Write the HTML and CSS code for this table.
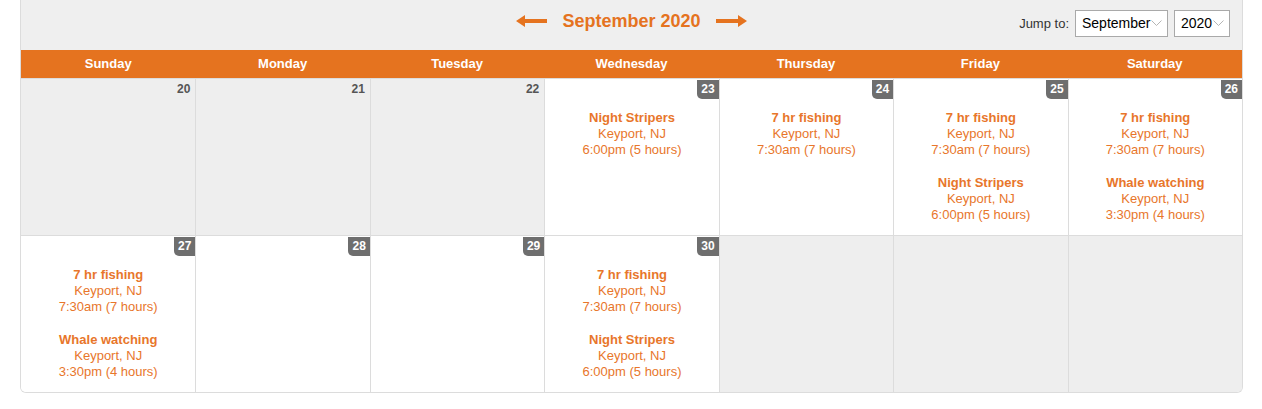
FILE: index.html
```html
<!DOCTYPE html>
<html>
<head>
<meta charset="utf-8">
<link rel="stylesheet" href="styles.css">
</head>
<body>
<div class="calendar">
  <div class="cal-head">
    <div></div>
    <div class="nav">
      <svg class="arrow" width="31" height="12" viewBox="0 0 31 12"><path d="M0 6 L9 0 L9 4 L31 4 L31 8 L9 8 L9 12 Z" fill="#e5731f"/></svg>
      <span class="month-title">September 2020</span>
      <svg class="arrow" width="31" height="12" viewBox="0 0 31 12"><path d="M31 6 L22 0 L22 4 L0 4 L0 8 L22 8 L22 12 Z" fill="#e5731f"/></svg>
    </div>
    <div class="jump">
      <span class="jump-label">Jump to:</span>
      <div class="select month-sel"><span>September</span><svg width="11" height="6" viewBox="0 0 11 6"><path d="M0.5 0.5 L5.5 5.5 L10.5 0.5" fill="none" stroke="#b5b5b5" stroke-width="1"/></svg></div>
      <div class="select year-sel"><span>2020</span><svg width="11" height="6" viewBox="0 0 11 6"><path d="M0.5 0.5 L5.5 5.5 L10.5 0.5" fill="none" stroke="#b5b5b5" stroke-width="1"/></svg></div>
    </div>
  </div>
  <div class="weekdays">
    <div>Sunday</div><div>Monday</div><div>Tuesday</div><div>Wednesday</div><div>Thursday</div><div>Friday</div><div>Saturday</div>
  </div>
  <div class="week">
    <div class="cell past"><div class="num plain">20</div></div>
    <div class="cell past"><div class="num plain">21</div></div>
    <div class="cell past"><div class="num plain">22</div></div>
    <div class="cell"><div class="num badge">23</div>
      <div class="events">
        <div class="event"><div class="ev-title">Night Stripers</div><div>Keyport, NJ</div><div>6:00pm (5 hours)</div></div>
      </div>
    </div>
    <div class="cell"><div class="num badge">24</div>
      <div class="events">
        <div class="event"><div class="ev-title">7 hr fishing</div><div>Keyport, NJ</div><div>7:30am (7 hours)</div></div>
      </div>
    </div>
    <div class="cell"><div class="num badge">25</div>
      <div class="events">
        <div class="event"><div class="ev-title">7 hr fishing</div><div>Keyport, NJ</div><div>7:30am (7 hours)</div></div>
        <div class="event"><div class="ev-title">Night Stripers</div><div>Keyport, NJ</div><div>6:00pm (5 hours)</div></div>
      </div>
    </div>
    <div class="cell"><div class="num badge">26</div>
      <div class="events">
        <div class="event"><div class="ev-title">7 hr fishing</div><div>Keyport, NJ</div><div>7:30am (7 hours)</div></div>
        <div class="event"><div class="ev-title">Whale watching</div><div>Keyport, NJ</div><div>3:30pm (4 hours)</div></div>
      </div>
    </div>
  </div>
  <div class="week">
    <div class="cell"><div class="num badge">27</div>
      <div class="events">
        <div class="event"><div class="ev-title">7 hr fishing</div><div>Keyport, NJ</div><div>7:30am (7 hours)</div></div>
        <div class="event"><div class="ev-title">Whale watching</div><div>Keyport, NJ</div><div>3:30pm (4 hours)</div></div>
      </div>
    </div>
    <div class="cell"><div class="num badge">28</div></div>
    <div class="cell"><div class="num badge">29</div></div>
    <div class="cell"><div class="num badge">30</div>
      <div class="events">
        <div class="event"><div class="ev-title">7 hr fishing</div><div>Keyport, NJ</div><div>7:30am (7 hours)</div></div>
        <div class="event"><div class="ev-title">Night Stripers</div><div>Keyport, NJ</div><div>6:00pm (5 hours)</div></div>
      </div>
    </div>
    <div class="cell past"></div>
    <div class="cell past"></div>
    <div class="cell past"></div>
  </div>
</div>
</body>
</html>
```

FILE: styles.css
```css
html, body {
  margin: 0;
  padding: 0;
  background: #fff;
}
body {
  font-family: "Liberation Sans", Arial, sans-serif;
}
.calendar {
  margin: 0 19px 0 20px;
  border: 1px solid #dcdcdc;
  border-top: none;
  border-radius: 0 0 6px 6px;
  overflow: hidden;
}
.cal-head {
  display: grid;
  grid-template-columns: 1fr auto 1fr;
  align-items: center;
  height: 50px;
  background: #efefef;
}
.nav {
  display: flex;
  align-items: center;
  gap: 15px;
  margin-top: -8px;
}
.arrow {
  display: block;
}
.month-title {
  color: #e5731f;
  font-weight: bold;
  font-size: 18px;
}
.jump {
  justify-self: end;
  display: flex;
  align-items: center;
  gap: 6px;
  padding-right: 12px;
  margin-top: -4px;
}
.jump-label {
  font-size: 13px;
  color: #333;
}
.select {
  box-sizing: border-box;
  height: 27px;
  border: 1px solid #a9a9a9;
  background: #fff;
  display: flex;
  align-items: center;
  justify-content: space-between;
  padding: 0 5px 0 6px;
  font-size: 14px;
  color: #000;
}
.month-sel { width: 93px; }
.year-sel { width: 56px; }
.weekdays {
  display: grid;
  grid-template-columns: repeat(7, 1fr);
  background: #e5731f;
  height: 29px;
  align-items: center;
  box-sizing: border-box;
  padding-bottom: 2px;
  border-bottom: 1px solid #dcdcdc;
}
.weekdays div {
  text-align: center;
  color: #fff;
  font-weight: bold;
  font-size: 13px;
}
.week {
  display: grid;
  grid-template-columns: repeat(7, 1fr);
  border-bottom: 1px solid #dcdcdc;
}
.week:last-child {
  border-bottom: none;
}
.cell {
  display: flex;
  flex-direction: column;
  background: #fff;
  border-left: 1px solid #dcdcdc;
  padding-top: 1px;
  padding-bottom: 12px;
  min-height: 143px;
}
.cell:first-child {
  border-left: none;
}
.cell.past {
  background: #eee;
}
.num {
  align-self: flex-end;
  height: 19px;
  line-height: 19px;
  font-size: 12px;
  font-weight: bold;
}
.num.plain {
  color: #555;
  padding-right: 5px;
}
.num.badge {
  background: #6e6e6e;
  color: #fff;
  padding: 0 4px;
  border-radius: 0 0 0 5px;
}
.events {
  margin-top: 11px;
  display: flex;
  flex-direction: column;
  gap: 17px;
}
.event {
  text-align: center;
  color: #e8762b;
  font-size: 13px;
  line-height: 16px;
}
.ev-title {
  font-weight: bold;
}
```
